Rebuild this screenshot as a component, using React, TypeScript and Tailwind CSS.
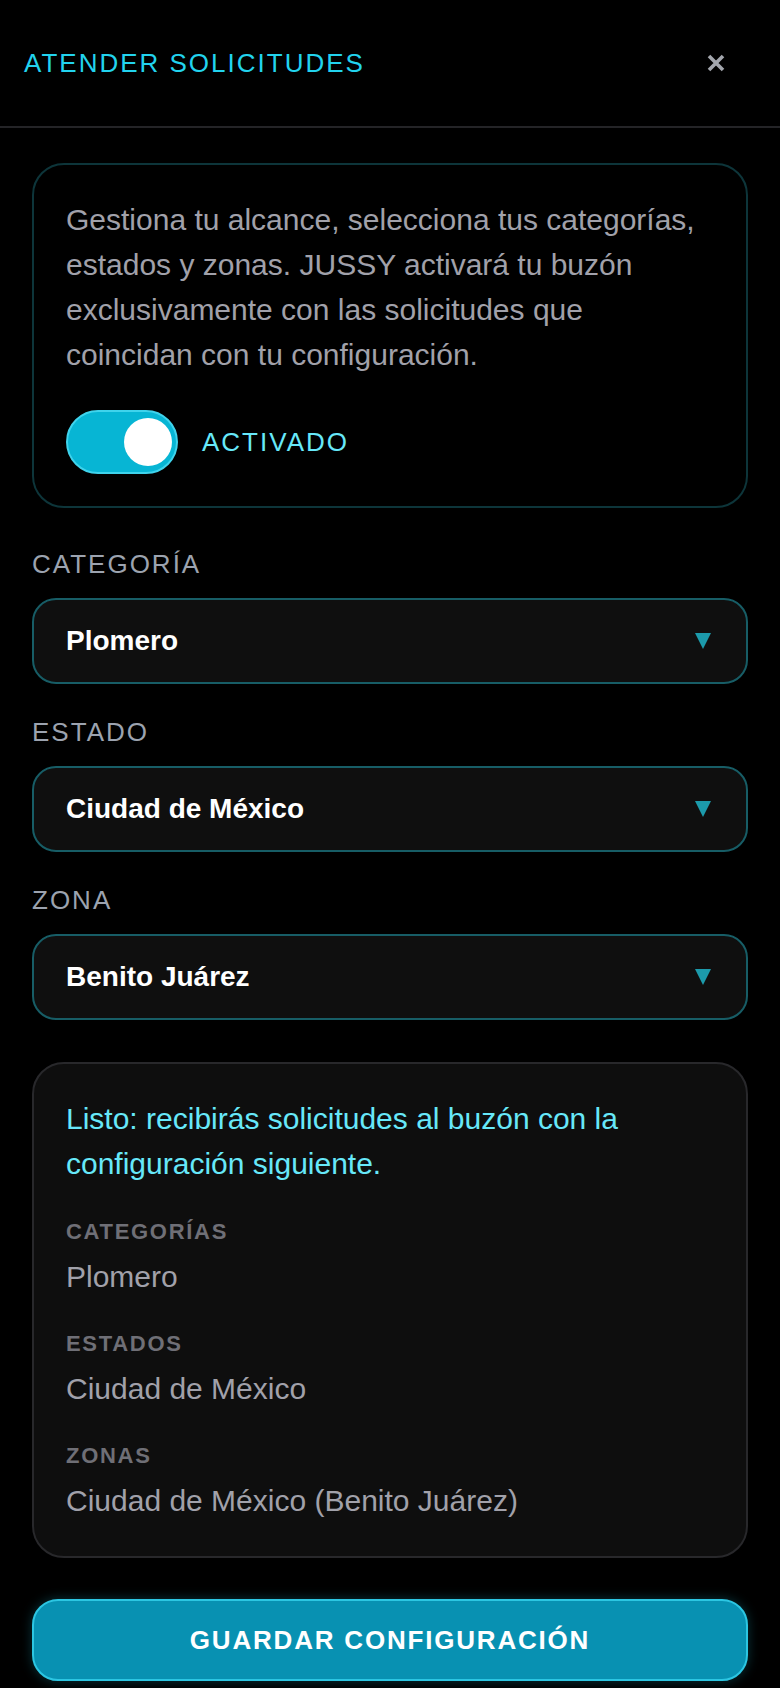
import React from 'react';

const fields = [
    { label: 'CATEGORÍA', value: 'Plomero' },
    { label: 'ESTADO', value: 'Ciudad de México' },
    { label: 'ZONA', value: 'Benito Juárez' },
];

const summary = [
    { label: 'CATEGORÍAS', value: 'Plomero' },
    { label: 'ESTADOS', value: 'Ciudad de México' },
    { label: 'ZONAS', value: 'Ciudad de México (Benito Juárez)' },
];

const SelectBox: React.FC<{ value: string }> = ({ value }) => (
    <div className="h-[86px] flex items-center justify-between rounded-[24px] border-2 border-[#175d66] bg-[#0f0f0f] pl-[32px] pr-[35px]">
        <span className="text-[28px] font-semibold text-white">{value}</span>
        <svg width="16" height="16" viewBox="0 0 16 16" className="shrink-0">
            <polygon points="0,0 16,0 8,16" fill="#1c9aab" />
        </svg>
    </div>
);

export default function App() {
    return (
        <div className="min-h-screen bg-black font-['Liberation_Sans',Arial,sans-serif]">
            {/* Header */}
            <header className="h-[128px] flex items-center justify-between pl-[24px] pr-[40px] border-b-2 border-[#242427]">
                <h1 className="text-[26px] leading-[30px] tracking-[2px] text-[#22d3ee]">ATENDER SOLICITUDES</h1>
                <button className="w-[48px] h-[48px] flex items-center justify-center">
                    <svg width="18" height="18" viewBox="0 0 18 18">
                        <path d="M2 2 L16 16 M16 2 L2 16" stroke="#a3a6ad" strokeWidth="3.6" strokeLinecap="butt" />
                    </svg>
                </button>
            </header>

            <main className="px-[32px] pt-[35px]">
                {/* Intro card */}
                <section className="rounded-[32px] border-2 border-[#0d353a] px-[32px] pt-[32px] pb-[32px]">
                    <p className="text-[30px] leading-[45px] text-[#a1a1aa]">
                        Gestiona tu alcance, selecciona tus categorías, estados y zonas. JUSSY activará tu buzón exclusivamente con las solicitudes que coincidan con tu configuración.
                    </p>
                    <div className="mt-[33px] flex items-center gap-[24px]">
                        <div className="w-[112px] h-[64px] rounded-full bg-[#07b5d4] border-2 border-[#3fd3ec] flex items-center justify-end pr-[4px]">
                            <div className="w-[48px] h-[48px] rounded-full bg-white" />
                        </div>
                        <span className="text-[26px] tracking-[2px] text-[#67e8f9]">ACTIVADO</span>
                    </div>
                </section>

                {/* Selects */}
                <div className="mt-[41px] flex flex-col gap-[33px]">
                    {fields.map((f) => (
                        <div key={f.label}>
                            <label className="block text-[26px] leading-[30px] tracking-[2px] text-[#9ca3af] mb-[19px]">{f.label}</label>
                            <SelectBox value={f.value} />
                        </div>
                    ))}
                </div>

                {/* Summary */}
                <section className="mt-[42px] rounded-[32px] border-2 border-[#28282b] bg-[#0e0e0e] px-[32px] pt-[32px] pb-[33px]">
                    <p className="text-[30px] leading-[45px] font-medium text-[#67e8f9]">
                        Listo: recibirás solicitudes al buzón con la configuración siguiente.
                    </p>
                    <div className="mt-[29px] flex flex-col gap-[28px]">
                        {summary.map((s) => (
                            <div key={s.label}>
                                <div className="text-[22px] leading-[33px] font-semibold tracking-[1.7px] text-[#6f6f76]">{s.label}</div>
                                <div className="mt-[6px] text-[30px] leading-[45px] text-[#a1a1aa]">{s.value}</div>
                            </div>
                        ))}
                    </div>
                </section>

                <button className="mt-[41px] w-full h-[82px] rounded-[26px] border-2 border-[#2cc6e2] bg-[#0891b2] text-[26px] font-semibold tracking-[1.8px] text-white shadow-[0_0_12px_rgba(34,211,238,0.25)]">
                    GUARDAR CONFIGURACIÓN
                </button>
            </main>
        </div>
    );
}
